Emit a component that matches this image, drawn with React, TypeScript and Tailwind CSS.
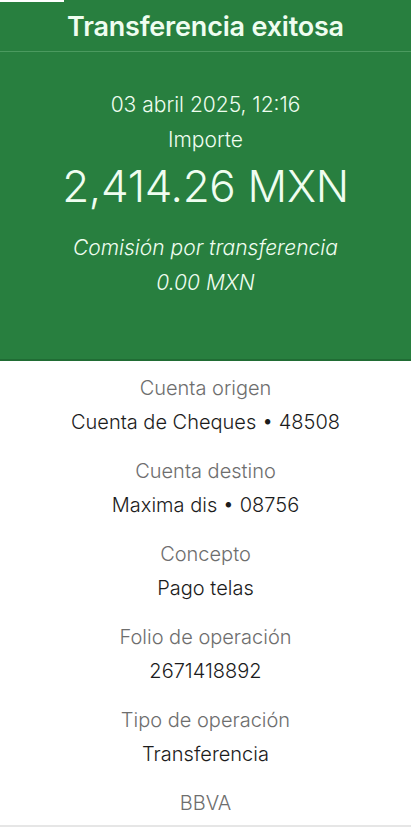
import React from "react";

const details = [
  { label: "Cuenta origen", value: "Cuenta de Cheques • 48508" },
  { label: "Cuenta destino", value: "Maxima dis • 08756" },
  { label: "Concepto", value: "Pago telas" },
  { label: "Folio de operación", value: "2671418892" },
  { label: "Tipo de operación", value: "Transferencia" },
];

const App = () => {
  return (
    <div className="w-[411px] min-h-[828px] bg-white font-['Inter','Liberation_Sans',sans-serif]">
      {/* green receipt header */}
      <section className="bg-[#287f3f] text-[#effdf0] border-b-2 border-[#206c34]">
        <div className="h-[52px] flex items-center justify-center border-b border-[#4b9a5f] relative">
          <div className="absolute left-0 top-0 w-[64px] h-[2px] bg-white" />
          <h1 className="text-[27px] font-semibold tracking-[-0.2px] pt-[3px]">
            Transferencia exitosa
          </h1>
        </div>
        <div className="flex flex-col items-center pt-[35px] pb-[59px]">
          <p className="text-[21px] font-light leading-[35px]">03 abril 2025, 12:16</p>
          <p className="text-[21px] font-light leading-[35px]">Importe</p>
          <p className="text-[44px] font-light leading-[58px] tracking-[-0.3px]">2,414.26 MXN</p>
          <p className="mt-[15px] text-[21px] font-light italic leading-[35px]">
            Comisión por transferencia
          </p>
          <p className="text-[21px] font-light italic leading-[35px]">0.00 MXN</p>
        </div>
      </section>

      {/* details list */}
      <section className="flex flex-col items-center pt-[10px]">
        {details.map((d) => (
          <div key={d.label} className="flex flex-col items-center mb-[15px]">
            <span className="text-[20px] font-light text-[#6e6e6e] leading-[34px]">{d.label}</span>
            <span className="text-[20px] font-light text-[#1c1c1c] leading-[34px]">{d.value}</span>
          </div>
        ))}
        <span className="text-[20px] font-light text-[#6e6e6e] leading-[34px]">BBVA</span>
      </section>
      <div className="mt-[5px] h-[2px] bg-[#e6e6e6]" />
    </div>
  );
};

export default App;
